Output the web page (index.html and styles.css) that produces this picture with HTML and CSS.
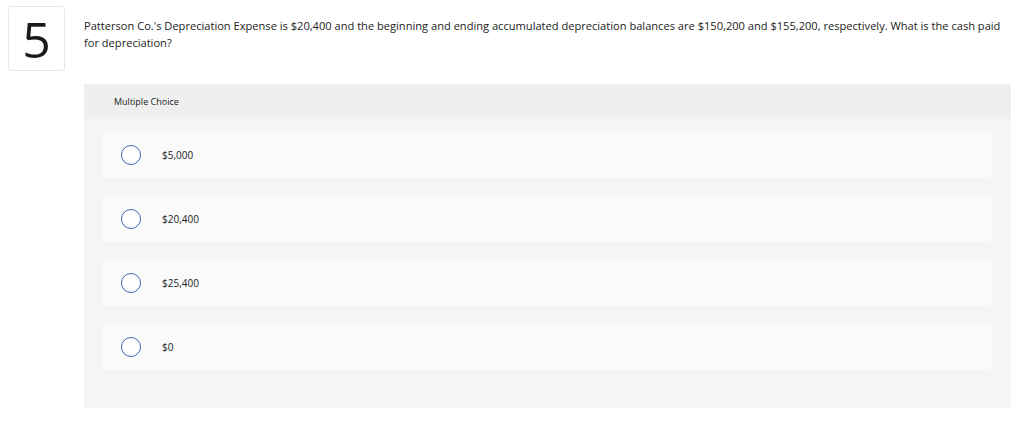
FILE: index.html
```html
<!DOCTYPE html>
<html>
<head>
<meta charset="utf-8">
<link rel="stylesheet" href="styles.css">
</head>
<body>
<div class="page">
  <div class="num-box"><span class="num">5</span></div>
  <div class="content">
    <p class="question">Patterson Co.'s Depreciation Expense is $20,400 and the beginning and ending accumulated depreciation balances are $150,200 and $155,200, respectively. What is the cash paid for depreciation?</p>
    <div class="panel">
      <div class="panel-head">Multiple Choice</div>
      <div class="options">
        <div class="option"><span class="radio"></span><span class="label">$5,000</span></div>
        <div class="option"><span class="radio"></span><span class="label">$20,400</span></div>
        <div class="option"><span class="radio"></span><span class="label">$25,400</span></div>
        <div class="option"><span class="radio"></span><span class="label">$0</span></div>
      </div>
    </div>
  </div>
</div>
</body>
</html>
```
FILE: styles.css
```css
html, body {
  margin: 0;
  padding: 0;
  background: #fff;
}
body {
  font-family: "Open Sans", "Liberation Sans", sans-serif;
  color: #222;
}
.page {
  display: flex;
  padding: 6px 13px 0 8px;
  gap: 19px;
}
.num-box {
  flex: none;
  width: 55px;
  height: 63px;
  border: 1px solid #e6e6e6;
  border-radius: 3px;
  display: flex;
  align-items: center;
  justify-content: center;
}
.num {
  font-size: 50px;
  font-weight: 400;
  line-height: 1;
  color: #1a1a1a;
}
.content {
  flex: 1;
  display: flex;
  flex-direction: column;
}
.question {
  margin: 11px 0 0 0;
  font-size: 11.1px;
  line-height: 17px;
  color: #222;
}
.panel {
  margin-top: 33px;
  background: #f5f5f5;
  padding-bottom: 38px;
}
.panel-head {
  background: #efefef;
  height: 35px;
  display: flex;
  align-items: center;
  padding-left: 30px;
  font-size: 9px;
  color: #222;
}
.options {
  display: flex;
  flex-direction: column;
  gap: 17px;
  padding: 12px 19px 0 19px;
}
.option {
  height: 47px;
  background: #fafafa;
  border-radius: 3px;
  display: flex;
  align-items: center;
  padding-left: 18px;
}
.radio {
  flex: none;
  width: 18px;
  height: 18px;
  border: 1px solid #3d6aa8;
  border-radius: 50%;
  background: #fff;
}
.label {
  margin-left: 21px;
  font-size: 10px;
  color: #222;
}
```
